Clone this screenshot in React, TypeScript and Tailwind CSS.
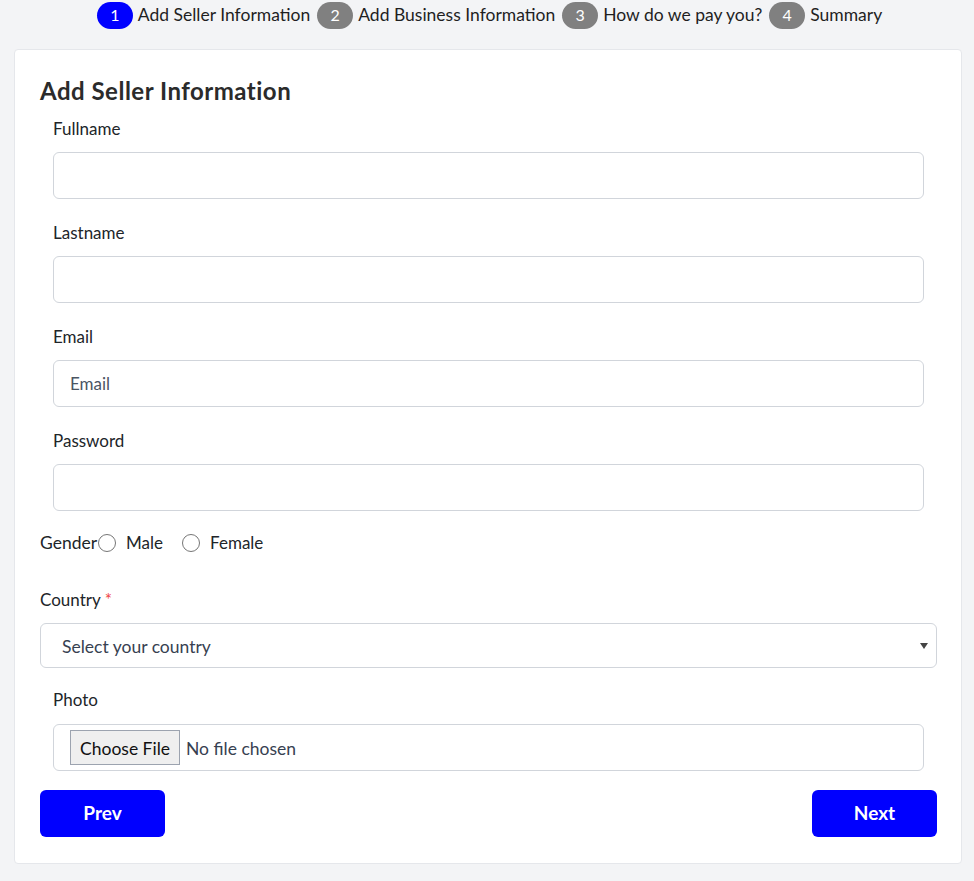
import React from "react";

const font = { fontFamily: "Lato, 'Open Sans', sans-serif" };

function Step({ n, label, active }: { n: string; label: string; active?: boolean }) {
  return (
    <div className="flex items-center gap-[5px]">
      <span
        className={`flex h-[27px] w-[36px] items-center justify-center rounded-full text-[16px] text-white ${
          active ? "bg-[#0000ff]" : "bg-[#808080]"
        }`}
      >
        {n}
      </span>
      <span className="text-[17.5px] text-[#1f1f1f]">{label}</span>
    </div>
  );
}

function Field({ label, placeholder }: { label: string; placeholder?: string }) {
  return (
    <div className="mx-[13px] flex flex-col">
      <label className="mb-[11px] text-[17px] leading-[24px] text-[#212529]">{label}</label>
      <div className="flex h-[47px] items-center rounded-[6px] border border-[#d1d5db] bg-white px-[16px] pt-[1px] text-[17px] text-[#4b5563]">
        {placeholder}
      </div>
    </div>
  );
}

export default function App() {
  return (
    <div className="min-h-[881px] bg-[#f3f4f6] pb-[18px]" style={font}>
      <div className="flex h-[30px] items-center justify-center gap-[7px] pl-[5px]">
        <Step n="1" label="Add Seller Information" active />
        <Step n="2" label="Add Business Information" />
        <Step n="3" label="How do we pay you?" />
        <Step n="4" label="Summary" />
      </div>
      <div className="ml-[14px] mr-[12px] mt-[19px] rounded-[4px] border border-[#e5e7eb] bg-white pb-[26px] pl-[25px] pr-[24px] pt-[27px]">
        <h1 className="text-[24px] font-bold leading-[28px] tracking-[0.5px] text-[#2b2b2b]">
          Add Seller Information
        </h1>
        <div className="mt-[12px] flex flex-col gap-[22px]">
          <Field label="Fullname" />
          <Field label="Lastname" />
          <Field label="Email" placeholder="Email" />
          <Field label="Password" />
        </div>
        <div className="mt-[20px] flex items-center text-[17px] leading-[24px] text-[#212529]">
          <span className="text-[17.5px]">Gender</span>
          <span className="ml-[1px] h-[18px] w-[18px] rounded-full border border-[#767676] bg-white" />
          <span className="ml-[10px]">Male</span>
          <span className="ml-[19px] h-[18px] w-[18px] rounded-full border border-[#767676] bg-white" />
          <span className="ml-[10px]">Female</span>
        </div>
        <div className="mt-[33px] text-[17px] leading-[24px] text-[#212529]">
          Country <span className="text-[#ef4444]">*</span>
        </div>
        <div className="mt-[11px] flex h-[45px] items-center justify-between rounded-[6px] border border-[#d1d5db] bg-white pl-[21px] pr-[8px] text-[17.5px] text-[#374151]">
          <span className="pt-[3px]">Select your country</span>
          <svg width="8" height="6" viewBox="0 0 8 6">
            <polygon points="0,0 8,0 4,6" fill="#444" />
          </svg>
        </div>
        <div className="mx-[13px] mt-[20px] flex flex-col">
          <label className="mb-[12px] text-[17px] leading-[24px] text-[#212529]">Photo</label>
          <div className="flex h-[47px] items-center rounded-[6px] border border-[#d1d5db] bg-white pl-[16px] text-[17.5px]">
            <span className="flex h-[35px] items-center border border-[#9ca3af] bg-[#efefef] px-[9px] pt-[3px] text-[#111]">
              Choose File
            </span>
            <span className="ml-[6px] pt-[3px] text-[#374151]">No file chosen</span>
          </div>
        </div>
        <div className="mt-[19px] flex justify-between">
          <button className="h-[47px] w-[125px] rounded-[6px] bg-[#0000ff] text-[19px] font-bold text-white">
            Prev
          </button>
          <button className="h-[47px] w-[125px] rounded-[6px] bg-[#0000ff] text-[19px] font-bold text-white">
            Next
          </button>
        </div>
      </div>
    </div>
  );
}
